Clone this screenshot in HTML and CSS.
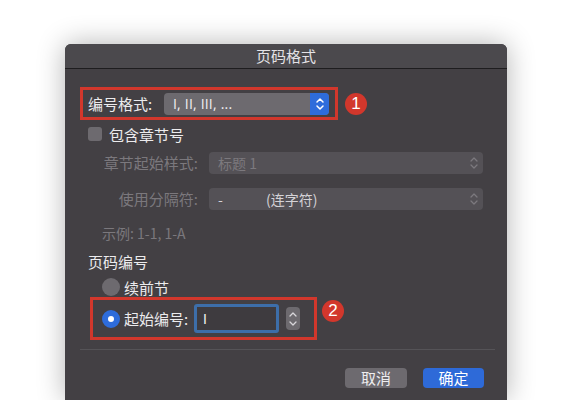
FILE: index.html
```html
<!DOCTYPE html>
<html>

<head>
  <title>页码格式</title>
  <link rel="stylesheet" href="styles.css">
</head>

<body>
  <div class="dialog">
    <div class="titlebar">页码格式</div>
    <div class="content">
      <div class="row-mark">
        <div class="redbox box-format">
          <span class="label">编号格式:</span>
          <div class="select active">
            <span class="select-text">I, II, III, ...</span>
            <span class="arrows blue">
              <svg width="10" height="14" viewBox="0 0 10 14"><path d="M2 5 L5 2 L8 5 M2 9 L5 12 L8 9" fill="none" stroke="#fff" stroke-width="1.5" stroke-linecap="round" stroke-linejoin="round"/></svg>
            </span>
          </div>
        </div>
        <span class="badge">1</span>
      </div>

      <label class="check-row">
        <span class="checkbox"></span>
        <span>包含章节号</span>
      </label>

      <div class="form-row first">
        <span class="form-label">章节起始样式:</span>
        <div class="select disabled">
          <span class="select-text">标题 1</span>
          <span class="arrows">
            <svg width="10" height="14" viewBox="0 0 10 14"><path d="M2 5 L5 2 L8 5 M2 9 L5 12 L8 9" fill="none" stroke="#7c797e" stroke-width="1.3" stroke-linecap="round" stroke-linejoin="round"/></svg>
          </span>
        </div>
      </div>

      <div class="form-row">
        <span class="form-label">使用分隔符:</span>
        <div class="select disabled">
          <span class="select-text light"><span class="dash">-</span>(连字符)</span>
          <span class="arrows">
            <svg width="10" height="14" viewBox="0 0 10 14"><path d="M2 5 L5 2 L8 5 M2 9 L5 12 L8 9" fill="none" stroke="#7c797e" stroke-width="1.3" stroke-linecap="round" stroke-linejoin="round"/></svg>
          </span>
        </div>
      </div>

      <div class="example">示例: 1-1, 1-A</div>

      <div class="section">页码编号</div>

      <label class="radio-row">
        <span class="radio"></span>
        <span>续前节</span>
      </label>

      <div class="row-mark">
        <div class="redbox box-start">
          <span class="radio on"></span>
          <span class="start-label">起始编号:</span>
          <div class="num-input"><span class="caret">I</span></div>
          <span class="stepper">
            <svg width="10" height="18" viewBox="0 0 10 18"><path d="M2 6 L5 3 L8 6 M2 12 L5 15 L8 12" fill="none" stroke="#d8d6da" stroke-width="1.3" stroke-linecap="round" stroke-linejoin="round"/></svg>
          </span>
        </div>
        <span class="badge badge-2">2</span>
      </div>

      <div class="separator"></div>

      <div class="buttons">
        <button class="btn">取消</button>
        <button class="btn primary">确定</button>
      </div>
    </div>
  </div>
</body>

</html>
```

FILE: styles.css
```css
body {
  margin: 0;
  height: 400px;
  overflow: hidden;
  background: #fff;
  font-family: "Noto Sans CJK SC", "Open Sans", sans-serif;
  font-size: 15px;
  color: #ecebed;
}

.dialog {
  margin: 44px 0 0 65px;
  width: 442px;
  height: 356px;
  background: #434044;
  border-radius: 6px 6px 0 0;
  box-shadow: 0 0 28px rgba(0, 0, 0, 0.3);
}

.titlebar {
  height: 24px;
  line-height: 24px;
  text-align: center;
  background: #4b494d;
  border-radius: 6px 6px 0 0;
  border-bottom: 1px solid #1e1d1f;
  color: #e4e2e6;
}

.content {
  padding: 0 12px 0 15px;
  display: flex;
  flex-direction: column;
}

.row-mark {
  display: flex;
  align-items: center;
}

.redbox {
  border: 3px solid #d2372c;
  display: flex;
  align-items: center;
  box-sizing: border-box;
}

.box-format {
  margin-top: 18px;
  width: 258px;
  height: 33px;
  padding: 0 6px 0 5px;
}

.label {
  width: 76px;
  line-height: 20px;
}

.select {
  display: flex;
  align-items: center;
  height: 22px;
  border-radius: 4px;
  box-sizing: border-box;
  overflow: hidden;
}

.select.active {
  width: 165px;
  background: #6d6a6f;
}

.select-text {
  flex-grow: 1;
  padding-left: 9px;
  line-height: 22px;
  font-size: 14px;
}

.active .select-text {
  color: #f2f1f3;
  font-family: "Open Sans", sans-serif;
  letter-spacing: 0.2px;
}

.arrows {
  width: 19px;
  height: 22px;
  display: flex;
  align-items: center;
  justify-content: center;
}

.arrows.blue {
  background: #2e6cdb;
}

.arrows svg {
  display: block;
}

.badge {
  width: 22px;
  height: 22px;
  border-radius: 50%;
  background: #d2372c;
  color: #fff;
  font-family: "Liberation Sans", sans-serif;
  font-size: 17px;
  line-height: 22px;
  text-align: center;
  margin-left: 7px;
  margin-top: 18px;
}

.check-row {
  display: flex;
  align-items: center;
  height: 20px;
  margin: 4px 0 0 8px;
}

.checkbox {
  width: 14px;
  height: 14px;
  border-radius: 3px;
  background: #6d6a6f;
  margin-right: 7px;
}

.form-row {
  display: flex;
  align-items: center;
  margin-top: 14px;
}

.form-row.first {
  margin-top: 8px;
}

.form-label {
  width: 118px;
  text-align: right;
  margin-right: 11px;
  color: #7b787d;
  line-height: 22px;
}

.select.disabled {
  width: 274px;
  background: #545156;
}

.disabled .select-text {
  color: #7c797e;
}

.disabled .select-text.light {
  color: #d4d2d6;
}

.dash {
  display: inline-block;
  width: 48px;
}

.example {
  margin: 13px 0 0 22px;
  line-height: 20px;
  color: #7b787d;
  font-size: 14px;
}

.section {
  margin: 9px 0 0 8px;
  line-height: 20px;
}

.radio-row {
  display: flex;
  align-items: center;
  height: 20px;
  margin: 5px 0 0 22px;
}

.radio {
  width: 18px;
  height: 18px;
  border-radius: 50%;
  background: #6d6a6f;
  margin-right: 4px;
  box-sizing: border-box;
}

.radio.on {
  border: 6px solid #2e6cdb;
  background-color: #fff;
}

.box-start {
  margin-left: 10px;
  width: 227px;
  height: 43px;
  padding: 0 12px 0 9px;
}

.start-label {
  width: 70px;
  line-height: 20px;
}

.num-input {
  width: 85px;
  height: 29px;
  box-sizing: border-box;
  border: 3px solid #3d6ea9;
  border-radius: 3px;
  background: #3e3b3f;
  display: flex;
  align-items: center;
}

.caret {
  margin-left: 6px;
  font-family: "Liberation Sans", sans-serif;
  font-size: 14px;
  color: #f2f1f3;
}

.stepper {
  width: 14px;
  height: 23px;
  margin-left: 7px;
  border-radius: 4px;
  background: #6d6a6f;
  display: flex;
  align-items: center;
  justify-content: center;
}

.badge-2 {
  margin-left: 5px;
  margin-top: -16px;
}

.separator {
  margin-top: 9px;
  height: 1px;
  background: #555357;
}

.buttons {
  display: flex;
  justify-content: flex-end;
  gap: 16px;
  margin: 18px 11px 0 0;
}

.btn {
  width: 62px;
  height: 20px;
  border: none;
  border-radius: 4px;
  background: #6d6a6f;
  color: #eeedef;
  font-family: "Noto Sans CJK SC", sans-serif;
  font-size: 15px;
  line-height: 20px;
  padding: 0;
}

.btn.primary {
  width: 61px;
  background: #2e6ad8;
  color: #fff;
}
```
